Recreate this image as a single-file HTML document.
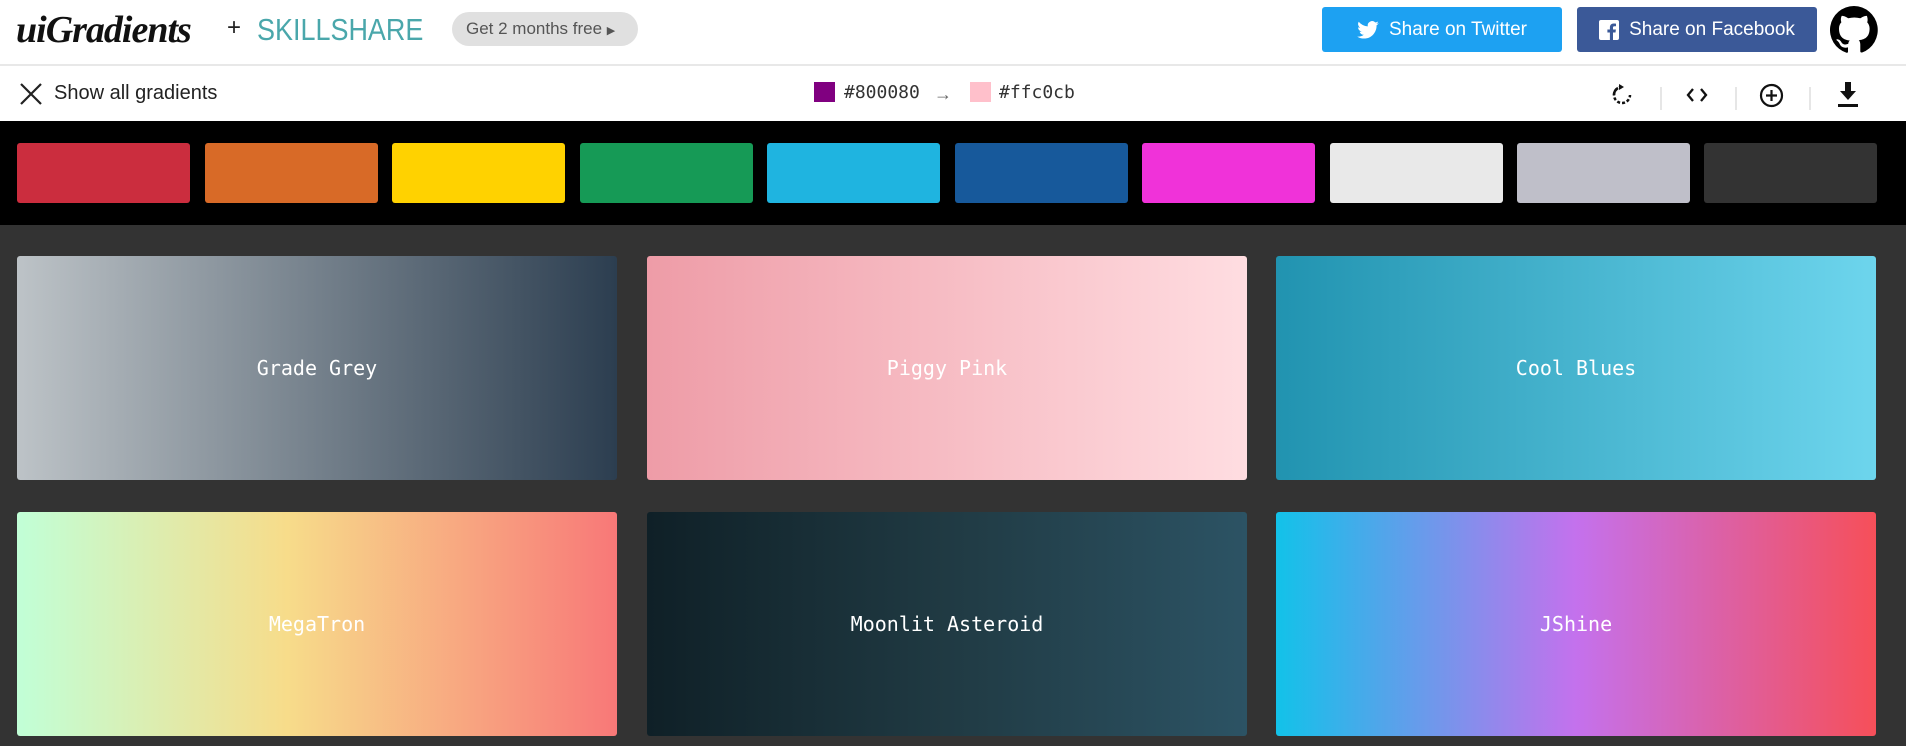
<!DOCTYPE html>
<html><head><meta charset="utf-8"><style>
*{margin:0;padding:0;box-sizing:border-box}
body{width:1906px;height:746px;overflow:hidden;background:#333;font-family:"Liberation Sans",sans-serif;position:relative}
.abs{position:absolute}
.hdr{left:0;top:0;width:1906px;height:66px;background:#fff;border-bottom:2px solid #e8e8e8}
.bar{left:0;top:66px;width:1906px;height:55px;background:#fff}
.blk{left:0;top:121px;width:1906px;height:104px;background:#000}
.sw{top:143px;width:173px;height:60px;border-radius:3px}
.card{width:600px;height:224px;border-radius:3px;color:#fff;font-family:"DejaVu Sans Mono","Liberation Mono",monospace;font-size:20px;display:flex;align-items:center;justify-content:center}
.btn{top:7px;height:45px;border-radius:3px;color:#fff;font-size:19px;display:flex;align-items:center;justify-content:center;gap:10px}
.sep{top:87px;width:2px;height:23px;background:#e6e6e6}
</style></head><body>
<div class="abs hdr"></div>
<div class="abs" style="left:16px;top:8px;font-family:'Liberation Serif',serif;font-style:italic;font-weight:bold;font-size:38px;color:#111;letter-spacing:-1px">uiGradients</div>
<div class="abs" style="left:227px;top:14px;font-size:24px;color:#222">+</div>
<div class="abs" style="left:257px;top:12px;font-size:31px;color:#4aa7ab;transform:scaleX(0.87);transform-origin:left">SKILLSHARE</div>
<div class="abs" style="left:452px;top:12px;width:186px;height:34px;border-radius:17px;background:#e0e0e0;color:#555;font-size:17px;line-height:34px;padding-left:14px">Get 2 months free <span style="font-size:11px">&#9654;</span></div>
<div class="abs btn" style="left:1322px;width:240px;background:#1da1f2">
<svg width="22" height="18" viewBox="0 0 24 20"><path fill="#fff" d="M24 2.4a9.8 9.8 0 0 1-2.8.8A4.9 4.9 0 0 0 23.3.5a9.9 9.9 0 0 1-3.1 1.2A4.9 4.9 0 0 0 11.8 6 14 14 0 0 1 1.7.9a4.9 4.9 0 0 0 1.5 6.6A4.9 4.9 0 0 1 1 6.9a4.9 4.9 0 0 0 3.9 4.9 4.9 4.9 0 0 1-2.2.1 4.9 4.9 0 0 0 4.6 3.4A9.9 9.9 0 0 1 0 17.3 14 14 0 0 0 7.5 19.5c9 0 14-7.5 14-14v-.6A10 10 0 0 0 24 2.4z"/></svg>Share on Twitter</div>
<div class="abs btn" style="left:1577px;width:240px;background:#3b5998">
<svg width="20" height="20" viewBox="0 0 20 20"><rect width="20" height="20" rx="2" fill="#fff"/><path fill="#3b5998" d="M14 20v-7.5h2.5l.4-3H14V7.7c0-.9.3-1.4 1.5-1.4H17V3.6a20 20 0 0 0-2.3-.1c-2.3 0-3.8 1.4-3.8 3.9v2.1H8.4v3h2.5V20z"/></svg>Share on Facebook</div>
<svg class="abs" style="left:1830px;top:6px" width="48" height="48" viewBox="0 0 16 16"><path fill="#000" d="M8 0a8 8 0 0 0-2.5 15.6c.4 0 .5-.2.5-.4v-1.4c-2.2.5-2.7-1-2.7-1-.4-.9-.9-1.2-.9-1.2-.7-.5.1-.5.1-.5.8.1 1.2.8 1.2.8.7 1.3 1.900.9 2.4.7 0-.5.3-.9.5-1.1-1.8-.2-3.6-.9-3.6-4 0-.9.3-1.6.8-2.1-.1-.2-.4-1 .1-2.1 0 0 .7-.2 2.2.8a7.5 7.5 0 0 1 4 0c1.5-1 2.2-.8 2.2-.8.4 1.1.2 1.9.1 2.1.5.6.8 1.3.8 2.1 0 3.1-1.9 3.7-3.6 3.9.3.3.5.8.5 1.5v2.2c0 .2.1.5.6.4A8 8 0 0 0 8 0z"/></svg>
<div class="abs bar"></div>
<svg class="abs" style="left:19px;top:82px" width="24" height="24" viewBox="0 0 24 24"><path d="M2 2L22 22M22 2L2 22" stroke="#222" stroke-width="2.2"/></svg>
<div class="abs" style="left:54px;top:82px;font-size:20px;color:#222">Show all gradients</div>
<div class="abs" style="left:814px;top:82px;width:21px;height:20px;background:#800080"></div>
<div class="abs" style="left:844px;top:82px;font-family:'DejaVu Sans Mono',monospace;font-size:18px;color:#333">#800080</div>
<div class="abs" style="left:934px;top:84px;font-size:18px;color:#666">&#8594;</div>
<div class="abs" style="left:970px;top:82px;width:21px;height:20px;background:#ffc0cb"></div>
<div class="abs" style="left:999px;top:82px;font-family:'DejaVu Sans Mono',monospace;font-size:18px;color:#333">#ffc0cb</div>
<svg class="abs" style="left:1611px;top:84px" width="22" height="22" viewBox="0 0 22 22"><path d="M11 3A8 8 0 1 0 19 11" fill="none" stroke="#111" stroke-width="2.5" stroke-dasharray="3 2"/><path d="M7 4a8 8 0 0 0-4 7" fill="none" stroke="#111" stroke-width="2.5"/><path d="M8 0l5 3-5 3z" fill="#111"/></svg>
<div class="abs sep" style="left:1660px"></div>
<svg class="abs" style="left:1686px;top:87px" width="22" height="16" viewBox="0 0 22 16"><path d="M7 2L2 8l5 6M15 2l5 6-5 6" fill="none" stroke="#111" stroke-width="2.3"/></svg>
<div class="abs sep" style="left:1735px"></div>
<svg class="abs" style="left:1759px;top:83px" width="25" height="25" viewBox="0 0 25 25"><circle cx="12.5" cy="12.5" r="10.5" fill="none" stroke="#111" stroke-width="2.2"/><path d="M12.5 7v11M7 12.5h11" stroke="#111" stroke-width="2.2"/></svg>
<div class="abs sep" style="left:1809px"></div>
<svg class="abs" style="left:1836px;top:82px" width="24" height="26" viewBox="0 0 24 26"><path d="M9 0h6v9h5l-8 9-8-9h5z" fill="#111"/><rect x="2" y="22" width="20" height="3" fill="#111"/></svg>
<div class="abs blk"></div>
<div class="abs sw" style="left:17px;background:#cb2d3e"></div>
<div class="abs sw" style="left:205px;background:#d86a27"></div>
<div class="abs sw" style="left:392px;background:#ffd200"></div>
<div class="abs sw" style="left:580px;background:#169a56"></div>
<div class="abs sw" style="left:767px;background:#1fb4e0"></div>
<div class="abs sw" style="left:955px;background:#17599b"></div>
<div class="abs sw" style="left:1142px;background:#f032d9"></div>
<div class="abs sw" style="left:1330px;background:#e9e9e9"></div>
<div class="abs sw" style="left:1517px;background:#bfbfc9"></div>
<div class="abs sw" style="left:1704px;background:#333"></div>
<div class="abs card" style="left:17px;top:256px;background:linear-gradient(90deg,#bdc3c7,#2c3e50)">Grade Grey</div>
<div class="abs card" style="left:647px;top:256px;background:linear-gradient(90deg,#ee9ca7,#ffdde1)">Piggy Pink</div>
<div class="abs card" style="left:1276px;top:256px;background:linear-gradient(90deg,#2193b0,#6dd5ed)">Cool Blues</div>
<div class="abs card" style="left:17px;top:512px;background:linear-gradient(90deg,#c1ffd7,#f7dc8a 45%,#f87878)">MegaTron</div>
<div class="abs card" style="left:647px;top:512px;background:linear-gradient(90deg,#0f2027,#203a43,#2c5364)">Moonlit Asteroid</div>
<div class="abs card" style="left:1276px;top:512px;background:linear-gradient(90deg,#12c2e9,#c471ed,#f64f59)">JShine</div>
</body></html>
